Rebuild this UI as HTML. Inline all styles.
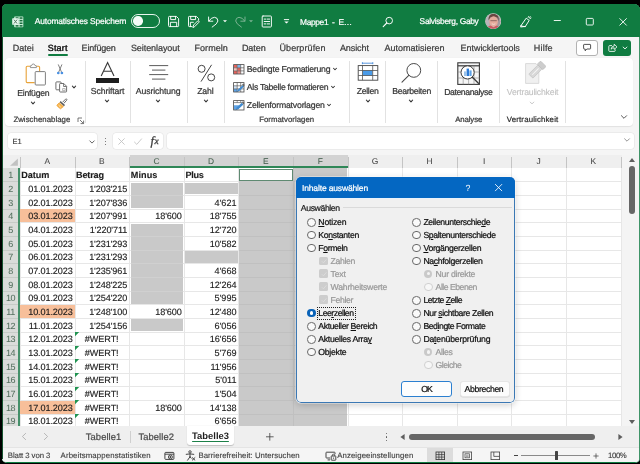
<!DOCTYPE html>
<html><head><meta charset="utf-8"><title>Excel</title>
<style>
html,body{margin:0;padding:0;background:#000;}
body{width:640px;height:464px;position:relative;overflow:hidden;font-family:"Liberation Sans",sans-serif;}
.r{position:absolute;display:block;}
.t{position:absolute;white-space:pre;display:block;text-rendering:geometricPrecision;}
u{text-decoration:underline;text-underline-offset:1px;text-decoration-thickness:0.7px;}
</style></head><body><div id="root" style="position:absolute;left:0;top:0;width:640px;height:464px;will-change:transform;">
<div class="r" id="win" style="left:1.5px;top:4.0px;width:638.5px;height:459.0px;background:#f5f5f5;border-radius:5px 6px 5px 5px;overflow:hidden;box-shadow:inset 0 0 0 0.9px #107c41;">
</div>
<div class="r" style="left:1.50px;top:4.00px;width:638.50px;height:33.20px;background:#107c41;border-radius:5px 6px 0 0;"></div>
<svg class="r" style="left:12.30px;top:15.50px;" width="12" height="12" viewBox="0 0 12 12"><rect x="2.2" y="0.4" width="9.1" height="10.8" rx="0.7" fill="#c9efd9"/><rect x="3.6" y="1.3" width="2.9" height="1.5" fill="#176c3b"/><rect x="7.6" y="1.3" width="2.9" height="1.5" fill="#176c3b"/><rect x="3.6" y="3.9" width="2.9" height="1.5" fill="#176c3b"/><rect x="7.6" y="3.9" width="2.9" height="1.5" fill="#176c3b"/><rect x="3.6" y="6.5" width="2.9" height="1.5" fill="#176c3b"/><rect x="7.6" y="6.5" width="2.9" height="1.5" fill="#176c3b"/><rect x="3.6" y="9.1" width="2.9" height="1.5" fill="#176c3b"/><rect x="7.6" y="9.1" width="2.9" height="1.5" fill="#176c3b"/><rect x="0.2" y="2.3" width="6.5" height="6.5" rx="0.6" fill="#e6f8ee"/><path d="M2 3.7L5 7.5M5 3.7L2 7.5" stroke="#557a66" stroke-width="1" fill="none"/></svg>
<span class="t" style="left:34.80px;top:15px;font-size:8.4px;line-height:12px;letter-spacing:-0.150px;color:#fff;-webkit-text-stroke:0.22px #fff;">Automatisches Speichern</span>
<div class="r" style="left:131.1px;top:13.7px;width:27px;height:12.3px;border:0.9px solid #e8f6ee;border-radius:7.2px;"></div>
<div class="r" style="left:133.4px;top:16.0px;width:9.6px;height:9.6px;border-radius:50%;background:#f4fbf7;"></div>
<svg class="r" style="left:167.00px;top:14.50px;" width="13" height="13" viewBox="0 0 13 13"><path d="M1.5 2.2Q1.5 1.4 2.3 1.4H9.4L11.6 3.6V10.8Q11.6 11.6 10.8 11.6H2.3Q1.5 11.6 1.5 10.8Z" fill="none" stroke="#fff" stroke-width="0.95" stroke-linejoin="round" stroke-linecap="round"/><path d="M3.7 1.4V4.6H8.6V1.4M3.4 11.6V7.3H9.7V11.6" fill="none" stroke="#fff" stroke-width="0.95" stroke-linejoin="round" stroke-linecap="round"/></svg>
<svg class="r" style="left:187.00px;top:14.50px;" width="13" height="13" viewBox="0 0 13 13"><path d="M5 11.6H2.3Q1.5 11.6 1.5 10.8V2.2Q1.5 1.4 2.3 1.4H9.4L11.6 3.6V5" fill="none" stroke="#fff" stroke-width="0.95" stroke-linejoin="round" stroke-linecap="round"/><path d="M3.7 1.4V4.6H8.6V1.4M3.4 11.6V7.3H6.4" fill="none" stroke="#fff" stroke-width="0.95" stroke-linejoin="round" stroke-linecap="round"/><path d="M6 12.2L6.6 10L10.6 6Q11.3 5.5 11.9 6.1Q12.4 6.7 11.9 7.3L7.9 11.4Z" fill="none" stroke="#fff" stroke-width="0.95" stroke-linejoin="round" stroke-linecap="round"/></svg>
<svg class="r" style="left:207.00px;top:14.50px;" width="13" height="13" viewBox="0 0 13 13"><path d="M1.6 2V6.2H5.8" fill="none" stroke="#fff" stroke-width="0.95" stroke-linejoin="round" stroke-linecap="round"/><path d="M1.9 6Q4.2 2.3 7.6 2.3Q10.9 2.6 10.9 6Q10.7 8.6 5.2 12.1" fill="none" stroke="#fff" stroke-width="0.95" stroke-linejoin="round" stroke-linecap="round"/></svg>
<svg class="r" style="left:220.60px;top:16.50px;" width="8" height="8" viewBox="0 0 8 8"><path d="M2 3.2L4 5.3L6 3.2Z" fill="#fff"/></svg>
<svg class="r" style="left:234.00px;top:14.50px;" width="13" height="13" viewBox="0 0 13 13"><path d="M11 2V6.2H6.8" fill="none" stroke="#7fb596" stroke-width="0.95" stroke-linejoin="round" stroke-linecap="round"/><path d="M10.7 6Q8.4 2.3 5 2.3Q1.7 2.6 1.7 6Q1.9 8.6 7.4 12.1" fill="none" stroke="#7fb596" stroke-width="0.95" stroke-linejoin="round" stroke-linecap="round"/></svg>
<svg class="r" style="left:247.00px;top:16.50px;" width="8" height="8" viewBox="0 0 8 8"><path d="M2 3.2L4 5.3L6 3.2Z" fill="#7fb596"/></svg>
<svg class="r" style="left:261.00px;top:15.00px;" width="12" height="13" viewBox="0 0 12 13"><rect x="1.2" y="1" width="9.2" height="11" rx="0.8" fill="none" stroke="#fff" stroke-width="0.95" stroke-linejoin="round" stroke-linecap="round"/><path d="M3.2 4.1H5M6.4 4.1H8.6M3.2 6.5H8.6M3.2 8.9H5M6.4 8.9H8.6" fill="none" stroke="#fff" stroke-width="0.95" stroke-linejoin="round" stroke-linecap="round"/></svg>
<svg class="r" style="left:282.00px;top:17.00px;" width="9" height="9" viewBox="0 0 9 9"><path d="M2.3 2.6H6.7" fill="none" stroke="#fff" stroke-width="0.95" stroke-linejoin="round" stroke-linecap="round"/><path d="M2.3 4.6L4.5 6.6L6.7 4.6Z" fill="#fff"/></svg>
<span class="t" style="left:300.10px;top:16px;font-size:8.4px;line-height:12px;letter-spacing:-0.361px;color:#fff;-webkit-text-stroke:0.22px #fff;">Mappe1  -  E…</span>
<svg class="r" style="left:382.00px;top:15.50px;" width="12" height="12" viewBox="0 0 12 12"><circle cx="7.2" cy="4.6" r="3.3" fill="none" stroke="#fff" stroke-width="0.95"/><path d="M4.8 7L1.2 10.6" stroke="#fff" stroke-width="1.1" stroke-linecap="round"/></svg>
<span class="t" style="left:419.60px;top:15px;font-size:8.4px;line-height:12px;letter-spacing:-0.304px;color:#fff;-webkit-text-stroke:0.22px #fff;">Salvisberg, Gaby</span>
<svg class="r" style="left:484.50px;top:12.90px;" width="16.4" height="16.4" viewBox="0 0 16.4 16.4"><defs><clipPath id="av"><circle cx="8.2" cy="8.2" r="7.5"/></clipPath></defs><circle cx="8.2" cy="8.2" r="8" fill="#d8cfcf"/><g clip-path="url(#av)"><rect x="0" y="0" width="16.4" height="16.4" fill="#a39a9e"/><rect x="0" y="0" width="4.6" height="16.4" fill="#b9b4ba"/><path d="M3.6 7.5Q3 1 8.8 0.8Q14.6 1.2 13.6 8.4L12.4 4.6H5.2Z" fill="#6a4640"/><ellipse cx="8.6" cy="8.6" rx="4.3" ry="5.3" fill="#e6ab9c"/><path d="M0.6 16.4Q1.8 13 6 12.8L8.5 14.4L11.2 12.8Q15 13.2 15.8 16.4Z" fill="#cf5a62"/><path d="M5.4 7.7H11.8" stroke="#7a5550" stroke-width="0.8"/><path d="M6.8 10.8Q8.6 12 10.4 10.8" stroke="#f6e4df" stroke-width="0.8" fill="none"/></g></svg>
<svg class="r" style="left:518.50px;top:14.50px;" width="13" height="13" viewBox="0 0 13 13"><path d="M2 10.6L7.2 3.2L10.2 5.4L6.4 11.4Z" fill="none" stroke="#fff" stroke-width="0.95" stroke-linejoin="round" stroke-linecap="round"/><path d="M2 10.6L1.6 12L6.4 11.4" fill="none" stroke="#fff" stroke-width="0.95" stroke-linejoin="round" stroke-linecap="round"/><path d="M9.2 2.4L9.8 1.4M11 3.6L12 3M10.4 2.8L11.4 1.8" fill="none" stroke="#fff" stroke-width="0.95" stroke-linejoin="round" stroke-linecap="round"/></svg>
<svg class="r" style="left:552.00px;top:16.00px;" width="10" height="10" viewBox="0 0 10 10"><path d="M1.8 4.5H8.8" stroke="#fff" stroke-width="0.9"/></svg>
<svg class="r" style="left:585.00px;top:16.50px;" width="10" height="10" viewBox="0 0 10 10"><rect x="1.3" y="1.4" width="7" height="6.6" rx="0.9" fill="none" stroke="#fff" stroke-width="0.9"/></svg>
<svg class="r" style="left:618.00px;top:16.50px;" width="10" height="10" viewBox="0 0 10 10"><path d="M1.8 1.6L8.4 8.2M8.4 1.6L1.8 8.2" stroke="#fff" stroke-width="0.9" stroke-linecap="round"/></svg>
<span class="t" style="left:12.80px;top:42px;font-size:9.0px;line-height:12px;letter-spacing:-0.042px;color:#3b3b3b;-webkit-text-stroke:0.22px #3b3b3b;">Datei</span>
<span class="t" style="left:47.80px;top:42px;font-size:9.0px;line-height:12px;letter-spacing:0.159px;color:#1f1f1f;-webkit-text-stroke:0.22px #1f1f1f;text-shadow:0 0 0.4px #222;">Start</span>
<div class="r" style="left:48.00px;top:54.40px;width:20.20px;height:1.20px;background:#107c41;border-radius:1px;"></div>
<span class="t" style="left:81.60px;top:42px;font-size:9.0px;line-height:12px;letter-spacing:-0.179px;color:#3b3b3b;-webkit-text-stroke:0.22px #3b3b3b;">Einfügen</span>
<span class="t" style="left:130.90px;top:42px;font-size:9.0px;line-height:12px;letter-spacing:-0.061px;color:#3b3b3b;-webkit-text-stroke:0.22px #3b3b3b;">Seitenlayout</span>
<span class="t" style="left:194.60px;top:42px;font-size:9.0px;line-height:12px;letter-spacing:0.013px;color:#3b3b3b;-webkit-text-stroke:0.22px #3b3b3b;">Formeln</span>
<span class="t" style="left:241.90px;top:42px;font-size:9.0px;line-height:12px;letter-spacing:-0.063px;color:#3b3b3b;-webkit-text-stroke:0.22px #3b3b3b;">Daten</span>
<span class="t" style="left:279.40px;top:42px;font-size:9.0px;line-height:12px;letter-spacing:0.117px;color:#3b3b3b;-webkit-text-stroke:0.22px #3b3b3b;">Überprüfen</span>
<span class="t" style="left:339.90px;top:42px;font-size:9.0px;line-height:12px;letter-spacing:-0.088px;color:#3b3b3b;-webkit-text-stroke:0.22px #3b3b3b;">Ansicht</span>
<span class="t" style="left:384.60px;top:42px;font-size:9.0px;line-height:12px;letter-spacing:-0.002px;color:#3b3b3b;-webkit-text-stroke:0.22px #3b3b3b;">Automatisieren</span>
<span class="t" style="left:460.60px;top:42px;font-size:9.0px;line-height:12px;letter-spacing:-0.055px;color:#3b3b3b;-webkit-text-stroke:0.22px #3b3b3b;">Entwicklertools</span>
<span class="t" style="left:533.80px;top:42px;font-size:9.0px;line-height:12px;letter-spacing:0.199px;color:#3b3b3b;-webkit-text-stroke:0.22px #3b3b3b;">Hilfe</span>
<div class="r" style="left:576.2px;top:39.8px;width:20px;height:14.6px;border:0.8px solid #b2b2b2;border-radius:3px;background:#fff;"></div>
<svg class="r" style="left:581.60px;top:43.00px;" width="11" height="10" viewBox="0 0 11 10"><path d="M2.2 1.4H8Q8.6 1.4 8.6 2V5.4Q8.6 6 8 6H4.8L3.2 7.8V6H2.2Q1.6 6 1.6 5.4V2Q1.6 1.4 2.2 1.4Z" fill="none" stroke="#333" stroke-width="0.85" stroke-linejoin="round"/></svg>
<div class="r" style="left:603.20px;top:40.20px;width:28.00px;height:15.40px;background:#107c41;border-radius:3px;"></div>
<svg class="r" style="left:606.50px;top:42.30px;" width="11" height="11" viewBox="0 0 11 11"><path d="M4.6 3.6H2.6Q1.8 3.6 1.8 4.4V8.6Q1.8 9.4 2.6 9.4H7.4Q8.2 9.4 8.2 8.6V7.8" fill="none" stroke="#fff" stroke-width="0.85" stroke-linecap="round"/><path d="M4 7.2Q4.4 4.2 7.2 4V2.2L10 4.9L7.2 7.4V5.8Q5.2 5.8 4 7.2Z" fill="none" stroke="#fff" stroke-width="0.8" stroke-linejoin="round"/></svg>
<svg class="r" style="left:621.20px;top:44.00px;" width="8" height="8" viewBox="0 0 8 8"><path d="M2.1 3.05L4 4.95L5.9 3.05" fill="none" stroke="#fff" stroke-width="0.9" stroke-linecap="round" stroke-linejoin="round"/></svg>
<div class="r" style="left:5.2px;top:57.6px;width:627.6px;height:68.6px;background:#fff;border-radius:4px;box-shadow:0 0.4px 1px rgba(0,0,0,0.08);"></div>
<div class="r" style="left:85.20px;top:61.00px;width:0.80px;height:61.50px;background:#e2e2e2;"></div>
<div class="r" style="left:129.80px;top:61.00px;width:0.80px;height:61.50px;background:#e2e2e2;"></div>
<div class="r" style="left:186.80px;top:61.00px;width:0.80px;height:61.50px;background:#e2e2e2;"></div>
<div class="r" style="left:224.20px;top:61.00px;width:0.80px;height:61.50px;background:#e2e2e2;"></div>
<div class="r" style="left:348.80px;top:61.00px;width:0.80px;height:61.50px;background:#e2e2e2;"></div>
<div class="r" style="left:385.20px;top:61.00px;width:0.80px;height:61.50px;background:#e2e2e2;"></div>
<div class="r" style="left:436.80px;top:61.00px;width:0.80px;height:61.50px;background:#e2e2e2;"></div>
<div class="r" style="left:499.20px;top:61.00px;width:0.80px;height:61.50px;background:#e2e2e2;"></div>
<div class="r" style="left:565.20px;top:61.00px;width:0.80px;height:61.50px;background:#e2e2e2;"></div>
<svg class="r" style="left:25.00px;top:62.80px;" width="21.5" height="23" viewBox="0 0 21.5 23"><path d="M5.6 3.2H2.2Q1.2 3.2 1.2 4.2V18.6Q1.2 19.6 2.2 19.6H9.6" fill="none" stroke="#e8a33a" stroke-width="1.1" stroke-linejoin="round"/><path d="M11.4 3.2H13.6Q14.6 3.2 14.6 4.2V8.4" fill="none" stroke="#e8a33a" stroke-width="1.1"/><path d="M5.4 4.6V3.2Q5.4 2.6 6 2.6H6.6Q6.8 1 8.3 1Q9.8 1 10 2.6H10.8Q11.4 2.6 11.4 3.2V4.6Z" fill="#fff" stroke="#7a7a7a" stroke-width="0.8" stroke-linejoin="round"/><rect x="10.2" y="8.6" width="10.2" height="13.4" rx="0.8" fill="#fff" stroke="#707070" stroke-width="0.9"/></svg>
<span class="t" style="left:17.20px;top:87px;font-size:8.7px;line-height:12px;letter-spacing:-0.268px;color:#363636;-webkit-text-stroke:0.22px #363636;">Einfügen</span>
<svg class="r" style="left:29.00px;top:98.60px;" width="8" height="8" viewBox="0 0 8 8"><path d="M2.4 3.2L4 4.8L5.6 3.2" fill="none" stroke="#3a3a3a" stroke-width="1.1" stroke-linecap="round" stroke-linejoin="round"/></svg>
<svg class="r" style="left:56.30px;top:63.80px;" width="9" height="12" viewBox="0 0 9 12"><path d="M2.4 0.8L5.3 7.6M5.8 0.8L2.9 7.6" stroke="#6a6a6a" stroke-width="0.85" fill="none" stroke-linecap="round"/><circle cx="2.3" cy="9" r="1.35" fill="#4a90e2"/><circle cx="5.9" cy="9" r="1.35" fill="#4a90e2"/></svg>
<svg class="r" style="left:54.80px;top:81.00px;" width="13" height="12" viewBox="0 0 13 12"><path d="M4.4 8.8H1.6Q0.9 8.8 0.9 8.1V1.6Q0.9 0.9 1.6 0.9H5.4Q6.1 0.9 6.1 1.6V2.4" fill="none" stroke="#555" stroke-width="0.85"/><path d="M4.6 3.2Q4.6 2.5 5.3 2.5H8.8L11.6 5.3V10.3Q11.6 11 10.9 11H5.3Q4.6 11 4.6 10.3Z" fill="#fff" stroke="#555" stroke-width="0.85" stroke-linejoin="round"/><path d="M8.6 2.7V5.5H11.4" fill="none" stroke="#555" stroke-width="0.8"/><path d="M7.6 7.6H10.2V9.6H7.6Z" fill="none" stroke="#888" stroke-width="0.6"/></svg>
<svg class="r" style="left:69.60px;top:82.60px;" width="8" height="8" viewBox="0 0 8 8"><path d="M2.4 3.2L4 4.8L5.6 3.2" fill="none" stroke="#3a3a3a" stroke-width="1.1" stroke-linecap="round" stroke-linejoin="round"/></svg>
<svg class="r" style="left:55.50px;top:98.20px;" width="12" height="12" viewBox="0 0 12 12"><path d="M7 3.8L9.6 1.1Q10.2 0.6 10.7 1.1Q11.2 1.6 10.7 2.2L8.2 5" fill="none" stroke="#6a6a6a" stroke-width="1" stroke-linecap="round"/><path d="M4.6 3L9 7L8 8.2L3.6 4.2Z" fill="#5e5e5e"/><path d="M3.2 4.8L7.4 8.6L4.6 10.8Q2.2 9.6 0.8 7.2Z" fill="#f7b54e" stroke="#ea9a2c" stroke-width="0.7" stroke-linejoin="round"/><path d="M2.6 7.2L4.8 9.2" stroke="#fde6c0" stroke-width="0.9"/></svg>
<span class="t" style="left:13.40px;top:114px;font-size:7.8px;line-height:11px;letter-spacing:0.045px;color:#3a3a3a;-webkit-text-stroke:0.22px #3a3a3a;">Zwischenablage</span>
<svg class="r" style="left:76.50px;top:116.50px;" width="8" height="8" viewBox="0 0 8 8"><path d="M1 5V1H5" fill="none" stroke="#555" stroke-width="0.8"/><path d="M3 3L6.4 6.4M6.6 3.6V6.6H3.6" fill="none" stroke="#555" stroke-width="0.8"/></svg>
<svg class="r" style="left:99.00px;top:61.00px;" width="18" height="17" viewBox="0 0 18 17"><path d="M2.2 15L8.6 1.6L15 15M4.5 10.2H12.7" fill="none" stroke="#3a3a3a" stroke-width="1.15" stroke-linejoin="miter"/></svg>
<div class="r" style="left:96.20px;top:78.20px;width:23.00px;height:4.40px;background:#1e1e1e;"></div>
<span class="t" style="left:90.80px;top:85px;font-size:8.7px;line-height:12px;letter-spacing:-0.121px;color:#363636;-webkit-text-stroke:0.22px #363636;">Schriftart</span>
<svg class="r" style="left:103.20px;top:97.20px;" width="8" height="8" viewBox="0 0 8 8"><path d="M2.4 3.2L4 4.8L5.6 3.2" fill="none" stroke="#3a3a3a" stroke-width="1.1" stroke-linecap="round" stroke-linejoin="round"/></svg>
<svg class="r" style="left:148.00px;top:63.00px;" width="22" height="19" viewBox="0 0 22 19"><path d="M1.2 2.6H20.2M4 7.1H17.4M1.2 11.6H20.2M4 16.1H17.4" stroke="#4a4a4a" stroke-width="0.9" fill="none"/></svg>
<span class="t" style="left:135.80px;top:85px;font-size:8.7px;line-height:12px;letter-spacing:-0.104px;color:#363636;-webkit-text-stroke:0.22px #363636;">Ausrichtung</span>
<svg class="r" style="left:154.20px;top:97.20px;" width="8" height="8" viewBox="0 0 8 8"><path d="M2.4 3.2L4 4.8L5.6 3.2" fill="none" stroke="#3a3a3a" stroke-width="1.1" stroke-linecap="round" stroke-linejoin="round"/></svg>
<svg class="r" style="left:195.50px;top:62.50px;" width="21" height="21" viewBox="0 0 21 21"><circle cx="5.6" cy="5.8" r="3.5" fill="none" stroke="#444" stroke-width="1"/><circle cx="15.2" cy="14.4" r="3.5" fill="none" stroke="#444" stroke-width="1"/><path d="M15.6 1.8L5 18.6" stroke="#444" stroke-width="1" fill="none"/></svg>
<span class="t" style="left:197.20px;top:85px;font-size:8.7px;line-height:12px;letter-spacing:-0.131px;color:#363636;-webkit-text-stroke:0.22px #363636;">Zahl</span>
<svg class="r" style="left:201.60px;top:97.20px;" width="8" height="8" viewBox="0 0 8 8"><path d="M2.4 3.2L4 4.8L5.6 3.2" fill="none" stroke="#3a3a3a" stroke-width="1.1" stroke-linecap="round" stroke-linejoin="round"/></svg>
<svg class="r" style="left:232.70px;top:63.60px;" width="12" height="11" viewBox="0 0 12 11"><rect x="0.6" y="0.6" width="10.4" height="9.4" fill="#fff"/><rect x="0.8" y="0.8" width="3.3" height="2.9" fill="#e9635c"/><rect x="4.3" y="0.8" width="3.3" height="2.9" fill="#7fb2e6"/><rect x="0.8" y="3.9" width="3.3" height="2.9" fill="#f6c4c0"/><rect x="4.3" y="3.9" width="3.3" height="2.9" fill="#e9635c"/><rect x="0.8" y="7" width="3.3" height="2.9" fill="#e9635c"/><rect x="4.3" y="7" width="3.3" height="2.9" fill="#f08a84"/><path d="M0.6 3.8H11M0.6 6.9H11M4.2 0.6V10M7.7 0.6V10" stroke="#555" stroke-width="0.65"/><rect x="0.6" y="0.6" width="10.4" height="9.4" fill="none" stroke="#4a4a4a" stroke-width="0.8"/></svg>
<svg class="r" style="left:232.70px;top:81.80px;" width="12" height="11" viewBox="0 0 12 11"><rect x="0.6" y="0.6" width="10.4" height="9.4" fill="#fff"/><rect x="0.8" y="7" width="3.3" height="2.9" fill="#5fa3e6"/><rect x="0.8" y="3.9" width="3.3" height="2.9" fill="#cfe3f7"/><path d="M0.6 3.8H11M0.6 6.9H11M4.2 0.6V10M7.7 0.6V10" stroke="#555" stroke-width="0.65"/><path d="M3.6 10.2L5 7.6L9.6 3.2L11 4.6L6.4 9Z" fill="#3f8ad0"/><path d="M9 2.6L10.2 1.4L11.8 3L10.6 4.2Z" fill="#777"/><rect x="0.6" y="0.6" width="10.4" height="9.4" fill="none" stroke="#4a4a4a" stroke-width="0.8"/></svg>
<svg class="r" style="left:232.70px;top:99.60px;" width="12" height="11" viewBox="0 0 12 11"><rect x="0.6" y="0.6" width="10.4" height="9.4" fill="#fff"/><path d="M0.8 5.2H6.4L2.2 9.8H0.8Z" fill="#5fa3e6"/><path d="M0.6 2.6H11M4.2 0.6V2.6M7.7 0.6V2.6" stroke="#555" stroke-width="0.65"/><path d="M2.2 10.2L3.6 7.4L8.8 2.8L10.4 4.4L5.4 9.2Z" fill="#3f8ad0"/><path d="M8.6 2.4L9.8 1.2L11.6 3L10.4 4.2Z" fill="#777"/><rect x="0.6" y="0.6" width="10.4" height="9.4" fill="none" stroke="#4a4a4a" stroke-width="0.8"/></svg>
<span class="t" style="left:246.80px;top:63px;font-size:8.7px;line-height:12px;letter-spacing:-0.233px;color:#363636;-webkit-text-stroke:0.22px #363636;">Bedingte Formatierung</span>
<svg class="r" style="left:330.60px;top:65.40px;" width="8" height="8" viewBox="0 0 8 8"><path d="M2.5 3.25L4 4.75L5.5 3.25" fill="none" stroke="#3a3a3a" stroke-width="1.05" stroke-linecap="round" stroke-linejoin="round"/></svg>
<span class="t" style="left:246.80px;top:81px;font-size:8.7px;line-height:12px;letter-spacing:-0.293px;color:#363636;-webkit-text-stroke:0.22px #363636;">Als Tabelle formatieren</span>
<svg class="r" style="left:329.00px;top:83.20px;" width="8" height="8" viewBox="0 0 8 8"><path d="M2.5 3.25L4 4.75L5.5 3.25" fill="none" stroke="#3a3a3a" stroke-width="1.05" stroke-linecap="round" stroke-linejoin="round"/></svg>
<span class="t" style="left:246.80px;top:99px;font-size:8.7px;line-height:12px;letter-spacing:-0.186px;color:#363636;-webkit-text-stroke:0.22px #363636;">Zellenformatvorlagen</span>
<svg class="r" style="left:325.00px;top:101.20px;" width="8" height="8" viewBox="0 0 8 8"><path d="M2.5 3.25L4 4.75L5.5 3.25" fill="none" stroke="#3a3a3a" stroke-width="1.05" stroke-linecap="round" stroke-linejoin="round"/></svg>
<span class="t" style="left:259.20px;top:114px;font-size:7.8px;line-height:11px;letter-spacing:0.027px;color:#3a3a3a;-webkit-text-stroke:0.22px #3a3a3a;">Formatvorlagen</span>
<svg class="r" style="left:356.50px;top:60.50px;" width="22" height="21" viewBox="0 0 22 21"><path d="M5.4 1.2V3.2M15.8 1.2V3.2M5.4 2.2H15.8" stroke="#2e7cd6" stroke-width="0.8" fill="none"/><rect x="1.2" y="4.6" width="19.6" height="14.6" fill="#fff" stroke="#444" stroke-width="0.9"/><rect x="5.7" y="9.3" width="9.8" height="5.4" fill="#4a9be8"/><path d="M1.2 9.5H20.8M1.2 14.5H20.8M5.5 4.6V19.2M15.7 4.6V19.2" stroke="#555" stroke-width="0.8" fill="none"/></svg>
<span class="t" style="left:356.80px;top:85px;font-size:8.7px;line-height:12px;letter-spacing:-0.349px;color:#363636;-webkit-text-stroke:0.22px #363636;">Zellen</span>
<svg class="r" style="left:363.60px;top:97.20px;" width="8" height="8" viewBox="0 0 8 8"><path d="M2.4 3.2L4 4.8L5.6 3.2" fill="none" stroke="#3a3a3a" stroke-width="1.1" stroke-linecap="round" stroke-linejoin="round"/></svg>
<svg class="r" style="left:400.00px;top:61.00px;" width="24" height="24" viewBox="0 0 24 24"><circle cx="13.8" cy="9.4" r="6.9" fill="none" stroke="#4a4a4a" stroke-width="1"/><path d="M8.8 14.4L2 21.2" stroke="#4a4a4a" stroke-width="1.1" stroke-linecap="round"/></svg>
<span class="t" style="left:392.20px;top:85px;font-size:8.7px;line-height:12px;letter-spacing:-0.328px;color:#363636;-webkit-text-stroke:0.22px #363636;">Bearbeiten</span>
<svg class="r" style="left:407.20px;top:97.20px;" width="8" height="8" viewBox="0 0 8 8"><path d="M2.4 3.2L4 4.8L5.6 3.2" fill="none" stroke="#3a3a3a" stroke-width="1.1" stroke-linecap="round" stroke-linejoin="round"/></svg>
<svg class="r" style="left:457.00px;top:62.00px;" width="24" height="24" viewBox="0 0 24 24"><rect x="0.8" y="0.8" width="21.6" height="21.6" fill="#f6f6f6" stroke="#3a3a3a" stroke-width="1.1"/><path d="M0.8 3.8H22.4" stroke="#3a3a3a" stroke-width="1.2"/><path d="M0.8 10H22.4M0.8 16H22.4M6.2 3.8V22.4M11.6 3.8V22.4M17 3.8V22.4" stroke="#8a8a8a" stroke-width="0.6" fill="none"/><circle cx="10.6" cy="10.4" r="6.6" fill="#fff" stroke="#3a3a3a" stroke-width="1"/><rect x="7" y="9.4" width="2.2" height="4.6" fill="#9cc4ea"/><rect x="9.6" y="6.6" width="2.4" height="7.4" fill="#2e7cd6"/><rect x="12.4" y="8.4" width="2.2" height="5.6" fill="#5fa3e6"/><path d="M15.4 15.2L21.4 21.2" stroke="#3a3a3a" stroke-width="1.3" stroke-linecap="round"/></svg>
<span class="t" style="left:444.20px;top:86px;font-size:8.7px;line-height:12px;letter-spacing:-0.417px;color:#363636;-webkit-text-stroke:0.22px #363636;">Datenanalyse</span>
<span class="t" style="left:455.20px;top:114px;font-size:7.8px;line-height:11px;letter-spacing:-0.107px;color:#3a3a3a;-webkit-text-stroke:0.22px #3a3a3a;">Analyse</span>
<svg class="r" style="left:524.00px;top:61.00px;" width="22" height="24" viewBox="0 0 22 24"><path d="M1.6 2.6H12L14.8 5.4V22.4H1.6Z" fill="#f0f0f0" stroke="#d2d2d2" stroke-width="0.8"/><g transform="rotate(-45 12.5 9.5)"><rect x="4.5" y="6.6" width="13" height="5.8" rx="0.8" fill="#d8d8d8" stroke="#c2c2c2" stroke-width="0.7"/><rect x="17.5" y="5.6" width="4.6" height="7.8" rx="0.8" fill="#cdcdcd" stroke="#bdbdbd" stroke-width="0.7"/><path d="M6.5 9.5H15.5" stroke="#f4f4f4" stroke-width="1"/></g></svg>
<span class="t" style="left:506.80px;top:86px;font-size:8.7px;line-height:12px;letter-spacing:-0.203px;color:#c2c2c2;-webkit-text-stroke:0.1px #c2c2c2;">Vertraulichkeit</span>
<svg class="r" style="left:528.20px;top:99.00px;" width="8" height="8" viewBox="0 0 8 8"><path d="M2.2 3.1L4 4.9L5.8 3.1" fill="none" stroke="#c0c0c0" stroke-width="0.9" stroke-linecap="round" stroke-linejoin="round"/></svg>
<span class="t" style="left:506.80px;top:114px;font-size:7.8px;line-height:11px;letter-spacing:0.174px;color:#2e2e2e;-webkit-text-stroke:0.22px #2e2e2e;">Vertraulichkeit</span>
<svg class="r" style="left:619.80px;top:112.80px;" width="8" height="8" viewBox="0 0 8 8"><path d="M1.4 2.7L4 5.3L6.6 2.7" fill="none" stroke="#444" stroke-width="0.9" stroke-linecap="round" stroke-linejoin="round"/></svg>
<div class="r" style="left:7.8px;top:133.2px;width:89.6px;height:16.2px;background:#fff;border-radius:3px;box-shadow:0 0 0 0.5px #e2e2e2;"></div>
<span class="t" style="left:12.40px;top:136px;font-size:7.6px;line-height:11px;letter-spacing:0.102px;color:#333;-webkit-text-stroke:0.12px #333;">E1</span>
<svg class="r" style="left:87.60px;top:137.60px;" width="8" height="8" viewBox="0 0 8 8"><path d="M1.7999999999999998 2.9L4 5.1L6.2 2.9" fill="none" stroke="#555" stroke-width="0.9" stroke-linecap="round" stroke-linejoin="round"/></svg>
<div class="r" style="left:105.00px;top:137.55px;width:1.30px;height:1.30px;background:#555;border-radius:50%;"></div>
<div class="r" style="left:105.00px;top:140.75px;width:1.30px;height:1.30px;background:#555;border-radius:50%;"></div>
<div class="r" style="left:105.00px;top:143.95px;width:1.30px;height:1.30px;background:#555;border-radius:50%;"></div>
<div class="r" style="left:113.2px;top:133.2px;width:49.8px;height:16.2px;background:#fff;border-radius:3px;box-shadow:0 0 0 0.5px #e2e2e2;"></div>
<svg class="r" style="left:116.50px;top:137.00px;" width="9" height="9" viewBox="0 0 9 9"><path d="M1.4 1.4L7.6 7.6M7.6 1.4L1.4 7.6" stroke="#c4c4c4" stroke-width="0.9"/></svg>
<svg class="r" style="left:132.50px;top:137.00px;" width="10" height="9" viewBox="0 0 10 9"><path d="M1.2 4.8L3.8 7.4L8.8 1.6" stroke="#c4c4c4" stroke-width="0.9" fill="none"/></svg>
<span class="t" style="left:150.6px;top:133px;font-size:12.5px;line-height:16px;font-family:'Liberation Serif',serif;font-style:italic;-webkit-text-stroke:0.3px #3c3c3c;color:#3c3c3c;">f</span>
<span class="t" style="left:154.6px;top:136px;font-size:9.5px;line-height:12px;font-family:'Liberation Serif',serif;font-style:italic;-webkit-text-stroke:0.3px #3c3c3c;color:#3c3c3c;">x</span>
<div class="r" style="left:166.6px;top:133.2px;width:467.4px;height:16.2px;background:#fff;border-radius:3px;box-shadow:0 0 0 0.5px #e2e2e2;"></div>
<svg class="r" style="left:623.40px;top:135.60px;" width="8" height="8" viewBox="0 0 8 8"><path d="M1.6 2.8L4 5.2L6.4 2.8" fill="none" stroke="#8a8a8a" stroke-width="0.9" stroke-linecap="round" stroke-linejoin="round"/></svg>
<div class="r" style="left:20.40px;top:167.85px;width:601.20px;height:257.95px;background:#fff;"></div>
<div class="r" style="left:2.00px;top:154.80px;width:619.60px;height:13.05px;background:#efefef;"></div>
<div class="r" style="left:129.60px;top:154.80px;width:218.40px;height:13.05px;background:#d3d3d3;"></div>
<div class="r" style="left:2.00px;top:167.85px;width:16.20px;height:257.95px;background:#dadcda;"></div>
<div class="r" style="left:17.90px;top:167.85px;width:1.90px;height:257.95px;background:#45906a;"></div>
<svg class="r" style="left:8.50px;top:156.50px;" width="10" height="10" viewBox="0 0 10 10"><path d="M8.9 1.4V8.8H1.1Z" fill="#c2c2c2"/></svg>
<div class="r" style="left:20.05px;top:167.85px;width:0.70px;height:257.95px;background:#e7e7e7;"></div>
<div class="r" style="left:74.65px;top:167.85px;width:0.70px;height:257.95px;background:#e7e7e7;"></div>
<div class="r" style="left:129.25px;top:167.85px;width:0.70px;height:257.95px;background:#e7e7e7;"></div>
<div class="r" style="left:183.85px;top:167.85px;width:0.70px;height:257.95px;background:#e7e7e7;"></div>
<div class="r" style="left:238.45px;top:167.85px;width:0.70px;height:257.95px;background:#e7e7e7;"></div>
<div class="r" style="left:293.05px;top:167.85px;width:0.70px;height:257.95px;background:#e7e7e7;"></div>
<div class="r" style="left:347.65px;top:167.85px;width:0.70px;height:257.95px;background:#e7e7e7;"></div>
<div class="r" style="left:402.25px;top:167.85px;width:0.70px;height:257.95px;background:#e7e7e7;"></div>
<div class="r" style="left:456.85px;top:167.85px;width:0.70px;height:257.95px;background:#e7e7e7;"></div>
<div class="r" style="left:511.45px;top:167.85px;width:0.70px;height:257.95px;background:#e7e7e7;"></div>
<div class="r" style="left:566.05px;top:167.85px;width:0.70px;height:257.95px;background:#e7e7e7;"></div>
<div class="r" style="left:620.65px;top:167.85px;width:0.70px;height:257.95px;background:#e7e7e7;"></div>
<div class="r" style="left:20.40px;top:181.17px;width:600.60px;height:0.70px;background:#e7e7e7;"></div>
<div class="r" style="left:20.40px;top:194.84px;width:600.60px;height:0.70px;background:#e7e7e7;"></div>
<div class="r" style="left:20.40px;top:208.51px;width:600.60px;height:0.70px;background:#e7e7e7;"></div>
<div class="r" style="left:20.40px;top:222.18px;width:600.60px;height:0.70px;background:#e7e7e7;"></div>
<div class="r" style="left:20.40px;top:235.85px;width:600.60px;height:0.70px;background:#e7e7e7;"></div>
<div class="r" style="left:20.40px;top:249.52px;width:600.60px;height:0.70px;background:#e7e7e7;"></div>
<div class="r" style="left:20.40px;top:263.19px;width:600.60px;height:0.70px;background:#e7e7e7;"></div>
<div class="r" style="left:20.40px;top:276.86px;width:600.60px;height:0.70px;background:#e7e7e7;"></div>
<div class="r" style="left:20.40px;top:290.53px;width:600.60px;height:0.70px;background:#e7e7e7;"></div>
<div class="r" style="left:20.40px;top:304.20px;width:600.60px;height:0.70px;background:#e7e7e7;"></div>
<div class="r" style="left:20.40px;top:317.87px;width:600.60px;height:0.70px;background:#e7e7e7;"></div>
<div class="r" style="left:20.40px;top:331.54px;width:600.60px;height:0.70px;background:#e7e7e7;"></div>
<div class="r" style="left:20.40px;top:345.21px;width:600.60px;height:0.70px;background:#e7e7e7;"></div>
<div class="r" style="left:20.40px;top:358.88px;width:600.60px;height:0.70px;background:#e7e7e7;"></div>
<div class="r" style="left:20.40px;top:372.55px;width:600.60px;height:0.70px;background:#e7e7e7;"></div>
<div class="r" style="left:20.40px;top:386.22px;width:600.60px;height:0.70px;background:#e7e7e7;"></div>
<div class="r" style="left:20.40px;top:399.89px;width:600.60px;height:0.70px;background:#e7e7e7;"></div>
<div class="r" style="left:20.40px;top:413.56px;width:600.60px;height:0.70px;background:#e7e7e7;"></div>
<div class="r" style="left:20.05px;top:156.50px;width:0.70px;height:11.35px;background:#c4c4c4;"></div>
<div class="r" style="left:74.65px;top:156.50px;width:0.70px;height:11.35px;background:#c4c4c4;"></div>
<div class="r" style="left:129.25px;top:156.50px;width:0.70px;height:11.35px;background:#c4c4c4;"></div>
<div class="r" style="left:183.85px;top:156.50px;width:0.70px;height:11.35px;background:#c4c4c4;"></div>
<div class="r" style="left:238.45px;top:156.50px;width:0.70px;height:11.35px;background:#c4c4c4;"></div>
<div class="r" style="left:293.05px;top:156.50px;width:0.70px;height:11.35px;background:#c4c4c4;"></div>
<div class="r" style="left:347.65px;top:156.50px;width:0.70px;height:11.35px;background:#c4c4c4;"></div>
<div class="r" style="left:402.25px;top:156.50px;width:0.70px;height:11.35px;background:#c4c4c4;"></div>
<div class="r" style="left:456.85px;top:156.50px;width:0.70px;height:11.35px;background:#c4c4c4;"></div>
<div class="r" style="left:511.45px;top:156.50px;width:0.70px;height:11.35px;background:#c4c4c4;"></div>
<div class="r" style="left:566.05px;top:156.50px;width:0.70px;height:11.35px;background:#c4c4c4;"></div>
<div class="r" style="left:620.65px;top:156.50px;width:0.70px;height:11.35px;background:#c4c4c4;"></div>
<div class="r" style="left:2.00px;top:181.17px;width:16.00px;height:0.70px;background:#c6cbc7;"></div>
<div class="r" style="left:2.00px;top:194.84px;width:16.00px;height:0.70px;background:#c6cbc7;"></div>
<div class="r" style="left:2.00px;top:208.51px;width:16.00px;height:0.70px;background:#c6cbc7;"></div>
<div class="r" style="left:2.00px;top:222.18px;width:16.00px;height:0.70px;background:#c6cbc7;"></div>
<div class="r" style="left:2.00px;top:235.85px;width:16.00px;height:0.70px;background:#c6cbc7;"></div>
<div class="r" style="left:2.00px;top:249.52px;width:16.00px;height:0.70px;background:#c6cbc7;"></div>
<div class="r" style="left:2.00px;top:263.19px;width:16.00px;height:0.70px;background:#c6cbc7;"></div>
<div class="r" style="left:2.00px;top:276.86px;width:16.00px;height:0.70px;background:#c6cbc7;"></div>
<div class="r" style="left:2.00px;top:290.53px;width:16.00px;height:0.70px;background:#c6cbc7;"></div>
<div class="r" style="left:2.00px;top:304.20px;width:16.00px;height:0.70px;background:#c6cbc7;"></div>
<div class="r" style="left:2.00px;top:317.87px;width:16.00px;height:0.70px;background:#c6cbc7;"></div>
<div class="r" style="left:2.00px;top:331.54px;width:16.00px;height:0.70px;background:#c6cbc7;"></div>
<div class="r" style="left:2.00px;top:345.21px;width:16.00px;height:0.70px;background:#c6cbc7;"></div>
<div class="r" style="left:2.00px;top:358.88px;width:16.00px;height:0.70px;background:#c6cbc7;"></div>
<div class="r" style="left:2.00px;top:372.55px;width:16.00px;height:0.70px;background:#c6cbc7;"></div>
<div class="r" style="left:2.00px;top:386.22px;width:16.00px;height:0.70px;background:#c6cbc7;"></div>
<div class="r" style="left:2.00px;top:399.89px;width:16.00px;height:0.70px;background:#c6cbc7;"></div>
<div class="r" style="left:2.00px;top:413.56px;width:16.00px;height:0.70px;background:#c6cbc7;"></div>
<div class="r" style="left:129.60px;top:166.40px;width:218.40px;height:1.50px;background:#2f8757;"></div>
<span class="t" style="left:44.50px;top:155px;font-size:8.4px;line-height:12px;letter-spacing:0.800px;color:#444;-webkit-text-stroke:0.05px #444;">A</span>
<span class="t" style="left:99.10px;top:155px;font-size:8.4px;line-height:12px;letter-spacing:0.800px;color:#444;-webkit-text-stroke:0.05px #444;">B</span>
<span class="t" style="left:153.47px;top:155px;font-size:8.4px;line-height:12px;letter-spacing:0.800px;color:#46604f;-webkit-text-stroke:0.05px #46604f;">C</span>
<span class="t" style="left:208.07px;top:155px;font-size:8.4px;line-height:12px;letter-spacing:0.800px;color:#46604f;-webkit-text-stroke:0.05px #46604f;">D</span>
<span class="t" style="left:262.90px;top:155px;font-size:8.4px;line-height:12px;letter-spacing:0.800px;color:#46604f;-webkit-text-stroke:0.05px #46604f;">E</span>
<span class="t" style="left:317.73px;top:155px;font-size:8.4px;line-height:12px;letter-spacing:0.800px;color:#46604f;-webkit-text-stroke:0.05px #46604f;">F</span>
<span class="t" style="left:371.63px;top:155px;font-size:8.4px;line-height:12px;letter-spacing:0.800px;color:#444;-webkit-text-stroke:0.05px #444;">G</span>
<span class="t" style="left:426.47px;top:155px;font-size:8.4px;line-height:12px;letter-spacing:0.800px;color:#444;-webkit-text-stroke:0.05px #444;">H</span>
<span class="t" style="left:482.93px;top:155px;font-size:8.4px;line-height:12px;letter-spacing:0.800px;color:#444;-webkit-text-stroke:0.05px #444;">I</span>
<span class="t" style="left:536.60px;top:155px;font-size:8.4px;line-height:12px;letter-spacing:0.800px;color:#444;-webkit-text-stroke:0.05px #444;">J</span>
<span class="t" style="left:590.50px;top:155px;font-size:8.4px;line-height:12px;letter-spacing:0.800px;color:#444;-webkit-text-stroke:0.05px #444;">K</span>
<span class="t" style="left:8.25px;top:169px;font-size:9.0px;line-height:12px;letter-spacing:-0.501px;color:#55705f;-webkit-text-stroke:0.05px #55705f;">1</span>
<span class="t" style="left:8.25px;top:183px;font-size:9.0px;line-height:12px;letter-spacing:-0.501px;color:#55705f;-webkit-text-stroke:0.05px #55705f;">2</span>
<span class="t" style="left:8.25px;top:197px;font-size:9.0px;line-height:12px;letter-spacing:-0.501px;color:#55705f;-webkit-text-stroke:0.05px #55705f;">3</span>
<span class="t" style="left:8.25px;top:210px;font-size:9.0px;line-height:12px;letter-spacing:-0.501px;color:#55705f;-webkit-text-stroke:0.05px #55705f;">4</span>
<span class="t" style="left:8.25px;top:224px;font-size:9.0px;line-height:12px;letter-spacing:-0.501px;color:#55705f;-webkit-text-stroke:0.05px #55705f;">5</span>
<span class="t" style="left:8.25px;top:238px;font-size:9.0px;line-height:12px;letter-spacing:-0.501px;color:#55705f;-webkit-text-stroke:0.05px #55705f;">6</span>
<span class="t" style="left:8.25px;top:251px;font-size:9.0px;line-height:12px;letter-spacing:-0.501px;color:#55705f;-webkit-text-stroke:0.05px #55705f;">7</span>
<span class="t" style="left:8.25px;top:265px;font-size:9.0px;line-height:12px;letter-spacing:-0.501px;color:#55705f;-webkit-text-stroke:0.05px #55705f;">8</span>
<span class="t" style="left:8.25px;top:279px;font-size:9.0px;line-height:12px;letter-spacing:-0.501px;color:#55705f;-webkit-text-stroke:0.05px #55705f;">9</span>
<span class="t" style="left:6.00px;top:292px;font-size:9.0px;line-height:12px;letter-spacing:-0.501px;color:#55705f;-webkit-text-stroke:0.05px #55705f;">10</span>
<span class="t" style="left:6.30px;top:306px;font-size:9.0px;line-height:12px;letter-spacing:-0.467px;color:#55705f;-webkit-text-stroke:0.05px #55705f;">11</span>
<span class="t" style="left:6.00px;top:320px;font-size:9.0px;line-height:12px;letter-spacing:-0.501px;color:#55705f;-webkit-text-stroke:0.05px #55705f;">12</span>
<span class="t" style="left:6.00px;top:333px;font-size:9.0px;line-height:12px;letter-spacing:-0.501px;color:#55705f;-webkit-text-stroke:0.05px #55705f;">13</span>
<span class="t" style="left:6.00px;top:347px;font-size:9.0px;line-height:12px;letter-spacing:-0.501px;color:#55705f;-webkit-text-stroke:0.05px #55705f;">14</span>
<span class="t" style="left:6.00px;top:361px;font-size:9.0px;line-height:12px;letter-spacing:-0.501px;color:#55705f;-webkit-text-stroke:0.05px #55705f;">15</span>
<span class="t" style="left:6.00px;top:374px;font-size:9.0px;line-height:12px;letter-spacing:-0.501px;color:#55705f;-webkit-text-stroke:0.05px #55705f;">16</span>
<span class="t" style="left:6.00px;top:388px;font-size:9.0px;line-height:12px;letter-spacing:-0.501px;color:#55705f;-webkit-text-stroke:0.05px #55705f;">17</span>
<span class="t" style="left:6.00px;top:402px;font-size:9.0px;line-height:12px;letter-spacing:-0.501px;color:#55705f;-webkit-text-stroke:0.05px #55705f;">18</span>
<span class="t" style="left:6.00px;top:415px;font-size:9.0px;line-height:12px;letter-spacing:-0.501px;color:#55705f;-webkit-text-stroke:0.05px #55705f;">19</span>
<div class="r" style="left:19.80px;top:209.16px;width:54.90px;height:13.07px;background:#f7bf9a;"></div>
<div class="r" style="left:19.80px;top:304.85px;width:54.90px;height:13.07px;background:#f7bf9a;"></div>
<div class="r" style="left:19.80px;top:400.54px;width:54.90px;height:13.07px;background:#f7bf9a;"></div>
<div class="r" style="left:130.60px;top:182.52px;width:52.60px;height:25.34px;background:#c9c9c9;"></div>
<div class="r" style="left:130.60px;top:194.84px;width:52.60px;height:0.70px;background:#d0d0d0;"></div>
<div class="r" style="left:130.60px;top:223.53px;width:52.60px;height:80.02px;background:#c9c9c9;"></div>
<div class="r" style="left:130.60px;top:235.85px;width:52.60px;height:0.70px;background:#d0d0d0;"></div>
<div class="r" style="left:130.60px;top:249.52px;width:52.60px;height:0.70px;background:#d0d0d0;"></div>
<div class="r" style="left:130.60px;top:263.19px;width:52.60px;height:0.70px;background:#d0d0d0;"></div>
<div class="r" style="left:130.60px;top:276.86px;width:52.60px;height:0.70px;background:#d0d0d0;"></div>
<div class="r" style="left:130.60px;top:290.53px;width:52.60px;height:0.70px;background:#d0d0d0;"></div>
<div class="r" style="left:130.60px;top:319.22px;width:52.60px;height:11.67px;background:#c9c9c9;"></div>
<div class="r" style="left:185.20px;top:182.52px;width:52.60px;height:11.67px;background:#c9c9c9;"></div>
<div class="r" style="left:185.20px;top:250.87px;width:52.60px;height:11.67px;background:#c9c9c9;"></div>
<div class="r" style="left:239.10px;top:180.00px;width:108.30px;height:245.80px;background:#c9c9c9;"></div>
<div class="r" style="left:292.50px;top:168.05px;width:54.90px;height:12.35px;background:#c9c9c9;"></div>
<div class="r" style="left:239.10px;top:194.89px;width:108.30px;height:0.60px;background:#c0c0c0;"></div>
<div class="r" style="left:239.10px;top:208.56px;width:108.30px;height:0.60px;background:#c0c0c0;"></div>
<div class="r" style="left:239.10px;top:222.23px;width:108.30px;height:0.60px;background:#c0c0c0;"></div>
<div class="r" style="left:239.10px;top:235.90px;width:108.30px;height:0.60px;background:#c0c0c0;"></div>
<div class="r" style="left:239.10px;top:249.57px;width:108.30px;height:0.60px;background:#c0c0c0;"></div>
<div class="r" style="left:239.10px;top:263.24px;width:108.30px;height:0.60px;background:#c0c0c0;"></div>
<div class="r" style="left:239.10px;top:276.91px;width:108.30px;height:0.60px;background:#c0c0c0;"></div>
<div class="r" style="left:239.10px;top:290.58px;width:108.30px;height:0.60px;background:#c0c0c0;"></div>
<div class="r" style="left:239.10px;top:304.25px;width:108.30px;height:0.60px;background:#c0c0c0;"></div>
<div class="r" style="left:239.10px;top:317.92px;width:108.30px;height:0.60px;background:#c0c0c0;"></div>
<div class="r" style="left:239.10px;top:331.59px;width:108.30px;height:0.60px;background:#c0c0c0;"></div>
<div class="r" style="left:239.10px;top:345.26px;width:108.30px;height:0.60px;background:#c0c0c0;"></div>
<div class="r" style="left:239.10px;top:358.93px;width:108.30px;height:0.60px;background:#c0c0c0;"></div>
<div class="r" style="left:239.10px;top:372.60px;width:108.30px;height:0.60px;background:#c0c0c0;"></div>
<div class="r" style="left:239.10px;top:386.27px;width:108.30px;height:0.60px;background:#c0c0c0;"></div>
<div class="r" style="left:239.10px;top:399.94px;width:108.30px;height:0.60px;background:#c0c0c0;"></div>
<div class="r" style="left:239.10px;top:413.61px;width:108.30px;height:0.60px;background:#c0c0c0;"></div>
<div class="r" style="left:293.10px;top:168.05px;width:0.60px;height:257.75px;background:#c0c0c0;"></div>
<div class="r" style="left:293.80px;top:181.22px;width:53.60px;height:0.60px;background:#c0c0c0;"></div>
<div class="r" style="left:239.0px;top:168.7px;width:51.7px;height:9.9px;background:#fff;border:0.7px solid #5f8a72;"></div>
<span class="t" style="left:21.30px;top:169px;font-size:9.1px;line-height:12px;letter-spacing:-0.083px;color:#1c1c1c;font-weight:bold;-webkit-text-stroke:0.14px #1c1c1c;">Datum</span>
<span class="t" style="left:76.00px;top:169px;font-size:9.1px;line-height:12px;letter-spacing:-0.171px;color:#1c1c1c;font-weight:bold;-webkit-text-stroke:0.14px #1c1c1c;">Betrag</span>
<span class="t" style="left:130.80px;top:169px;font-size:9.1px;line-height:12px;letter-spacing:0.063px;color:#1c1c1c;font-weight:bold;-webkit-text-stroke:0.14px #1c1c1c;">Minus</span>
<span class="t" style="left:185.60px;top:169px;font-size:9.1px;line-height:12px;letter-spacing:-0.304px;color:#1c1c1c;font-weight:bold;-webkit-text-stroke:0.14px #1c1c1c;">Plus</span>
<span class="t" style="left:28.18px;top:183px;font-size:9.1px;line-height:12px;letter-spacing:-0.102px;color:#1c1c1c;-webkit-text-stroke:0.14px #1c1c1c;">01.01.2023</span>
<span class="t" style="left:89.15px;top:183px;font-size:9.1px;line-height:12px;letter-spacing:-0.084px;color:#1c1c1c;-webkit-text-stroke:0.14px #1c1c1c;">1'203'215</span>
<span class="t" style="left:28.18px;top:197px;font-size:9.1px;line-height:12px;letter-spacing:-0.102px;color:#1c1c1c;-webkit-text-stroke:0.14px #1c1c1c;">02.01.2023</span>
<span class="t" style="left:89.15px;top:197px;font-size:9.1px;line-height:12px;letter-spacing:-0.084px;color:#1c1c1c;-webkit-text-stroke:0.14px #1c1c1c;">1'207'836</span>
<span class="t" style="left:214.60px;top:197px;font-size:9.1px;line-height:12px;letter-spacing:-0.016px;color:#1c1c1c;-webkit-text-stroke:0.14px #1c1c1c;">4'621</span>
<span class="t" style="left:28.18px;top:210px;font-size:9.1px;line-height:12px;letter-spacing:-0.102px;color:#1c1c1c;-webkit-text-stroke:0.14px #1c1c1c;">03.01.2023</span>
<span class="t" style="left:89.15px;top:210px;font-size:9.1px;line-height:12px;letter-spacing:-0.084px;color:#1c1c1c;-webkit-text-stroke:0.14px #1c1c1c;">1'207'991</span>
<span class="t" style="left:209.74px;top:210px;font-size:9.1px;line-height:12px;letter-spacing:-0.047px;color:#1c1c1c;-webkit-text-stroke:0.14px #1c1c1c;">18'755</span>
<span class="t" style="left:155.14px;top:210px;font-size:9.1px;line-height:12px;letter-spacing:-0.047px;color:#1c1c1c;-webkit-text-stroke:0.14px #1c1c1c;">18'600</span>
<span class="t" style="left:28.18px;top:224px;font-size:9.1px;line-height:12px;letter-spacing:-0.102px;color:#1c1c1c;-webkit-text-stroke:0.14px #1c1c1c;">04.01.2023</span>
<span class="t" style="left:89.80px;top:224px;font-size:9.1px;line-height:12px;letter-spacing:-0.081px;color:#1c1c1c;-webkit-text-stroke:0.14px #1c1c1c;">1'220'711</span>
<span class="t" style="left:209.74px;top:224px;font-size:9.1px;line-height:12px;letter-spacing:-0.047px;color:#1c1c1c;-webkit-text-stroke:0.14px #1c1c1c;">12'720</span>
<span class="t" style="left:28.18px;top:238px;font-size:9.1px;line-height:12px;letter-spacing:-0.102px;color:#1c1c1c;-webkit-text-stroke:0.14px #1c1c1c;">05.01.2023</span>
<span class="t" style="left:89.15px;top:238px;font-size:9.1px;line-height:12px;letter-spacing:-0.084px;color:#1c1c1c;-webkit-text-stroke:0.14px #1c1c1c;">1'231'293</span>
<span class="t" style="left:209.74px;top:238px;font-size:9.1px;line-height:12px;letter-spacing:-0.047px;color:#1c1c1c;-webkit-text-stroke:0.14px #1c1c1c;">10'582</span>
<span class="t" style="left:28.18px;top:251px;font-size:9.1px;line-height:12px;letter-spacing:-0.102px;color:#1c1c1c;-webkit-text-stroke:0.14px #1c1c1c;">06.01.2023</span>
<span class="t" style="left:89.15px;top:251px;font-size:9.1px;line-height:12px;letter-spacing:-0.084px;color:#1c1c1c;-webkit-text-stroke:0.14px #1c1c1c;">1'231'293</span>
<span class="t" style="left:28.18px;top:265px;font-size:9.1px;line-height:12px;letter-spacing:-0.102px;color:#1c1c1c;-webkit-text-stroke:0.14px #1c1c1c;">07.01.2023</span>
<span class="t" style="left:89.15px;top:265px;font-size:9.1px;line-height:12px;letter-spacing:-0.084px;color:#1c1c1c;-webkit-text-stroke:0.14px #1c1c1c;">1'235'961</span>
<span class="t" style="left:214.60px;top:265px;font-size:9.1px;line-height:12px;letter-spacing:-0.016px;color:#1c1c1c;-webkit-text-stroke:0.14px #1c1c1c;">4'668</span>
<span class="t" style="left:28.18px;top:279px;font-size:9.1px;line-height:12px;letter-spacing:-0.102px;color:#1c1c1c;-webkit-text-stroke:0.14px #1c1c1c;">08.01.2023</span>
<span class="t" style="left:89.15px;top:279px;font-size:9.1px;line-height:12px;letter-spacing:-0.084px;color:#1c1c1c;-webkit-text-stroke:0.14px #1c1c1c;">1'248'225</span>
<span class="t" style="left:209.74px;top:279px;font-size:9.1px;line-height:12px;letter-spacing:-0.047px;color:#1c1c1c;-webkit-text-stroke:0.14px #1c1c1c;">12'264</span>
<span class="t" style="left:28.18px;top:292px;font-size:9.1px;line-height:12px;letter-spacing:-0.102px;color:#1c1c1c;-webkit-text-stroke:0.14px #1c1c1c;">09.01.2023</span>
<span class="t" style="left:89.15px;top:292px;font-size:9.1px;line-height:12px;letter-spacing:-0.084px;color:#1c1c1c;-webkit-text-stroke:0.14px #1c1c1c;">1'254'220</span>
<span class="t" style="left:214.60px;top:292px;font-size:9.1px;line-height:12px;letter-spacing:-0.016px;color:#1c1c1c;-webkit-text-stroke:0.14px #1c1c1c;">5'995</span>
<span class="t" style="left:28.18px;top:306px;font-size:9.1px;line-height:12px;letter-spacing:-0.102px;color:#1c1c1c;-webkit-text-stroke:0.14px #1c1c1c;">10.01.2023</span>
<span class="t" style="left:89.15px;top:306px;font-size:9.1px;line-height:12px;letter-spacing:-0.084px;color:#1c1c1c;-webkit-text-stroke:0.14px #1c1c1c;">1'248'100</span>
<span class="t" style="left:209.74px;top:306px;font-size:9.1px;line-height:12px;letter-spacing:-0.047px;color:#1c1c1c;-webkit-text-stroke:0.14px #1c1c1c;">12'480</span>
<span class="t" style="left:155.14px;top:306px;font-size:9.1px;line-height:12px;letter-spacing:-0.047px;color:#1c1c1c;-webkit-text-stroke:0.14px #1c1c1c;">18'600</span>
<span class="t" style="left:28.83px;top:320px;font-size:9.1px;line-height:12px;letter-spacing:-0.099px;color:#1c1c1c;-webkit-text-stroke:0.14px #1c1c1c;">11.01.2023</span>
<span class="t" style="left:89.15px;top:320px;font-size:9.1px;line-height:12px;letter-spacing:-0.084px;color:#1c1c1c;-webkit-text-stroke:0.14px #1c1c1c;">1'254'156</span>
<span class="t" style="left:214.60px;top:320px;font-size:9.1px;line-height:12px;letter-spacing:-0.016px;color:#1c1c1c;-webkit-text-stroke:0.14px #1c1c1c;">6'056</span>
<span class="t" style="left:28.18px;top:333px;font-size:9.1px;line-height:12px;letter-spacing:-0.102px;color:#1c1c1c;-webkit-text-stroke:0.14px #1c1c1c;">12.01.2023</span>
<span class="t" style="left:84.80px;top:333px;font-size:9.1px;line-height:12px;letter-spacing:-0.069px;color:#1c1c1c;-webkit-text-stroke:0.14px #1c1c1c;">#WERT!</span>
<svg class="r" style="left:75.20px;top:332.09px;" width="5" height="5" viewBox="0 0 5 5"><path d="M0 0H4.2L0 4.2Z" fill="#1f9350"/></svg>
<span class="t" style="left:209.74px;top:333px;font-size:9.1px;line-height:12px;letter-spacing:-0.047px;color:#1c1c1c;-webkit-text-stroke:0.14px #1c1c1c;">16'656</span>
<span class="t" style="left:28.18px;top:347px;font-size:9.1px;line-height:12px;letter-spacing:-0.102px;color:#1c1c1c;-webkit-text-stroke:0.14px #1c1c1c;">13.01.2023</span>
<span class="t" style="left:84.80px;top:347px;font-size:9.1px;line-height:12px;letter-spacing:-0.069px;color:#1c1c1c;-webkit-text-stroke:0.14px #1c1c1c;">#WERT!</span>
<svg class="r" style="left:75.20px;top:345.76px;" width="5" height="5" viewBox="0 0 5 5"><path d="M0 0H4.2L0 4.2Z" fill="#1f9350"/></svg>
<span class="t" style="left:214.60px;top:347px;font-size:9.1px;line-height:12px;letter-spacing:-0.016px;color:#1c1c1c;-webkit-text-stroke:0.14px #1c1c1c;">5'769</span>
<span class="t" style="left:28.18px;top:361px;font-size:9.1px;line-height:12px;letter-spacing:-0.102px;color:#1c1c1c;-webkit-text-stroke:0.14px #1c1c1c;">14.01.2023</span>
<span class="t" style="left:84.80px;top:361px;font-size:9.1px;line-height:12px;letter-spacing:-0.069px;color:#1c1c1c;-webkit-text-stroke:0.14px #1c1c1c;">#WERT!</span>
<svg class="r" style="left:75.20px;top:359.43px;" width="5" height="5" viewBox="0 0 5 5"><path d="M0 0H4.2L0 4.2Z" fill="#1f9350"/></svg>
<span class="t" style="left:210.39px;top:361px;font-size:9.1px;line-height:12px;letter-spacing:-0.042px;color:#1c1c1c;-webkit-text-stroke:0.14px #1c1c1c;">11'956</span>
<span class="t" style="left:28.18px;top:374px;font-size:9.1px;line-height:12px;letter-spacing:-0.102px;color:#1c1c1c;-webkit-text-stroke:0.14px #1c1c1c;">15.01.2023</span>
<span class="t" style="left:84.80px;top:374px;font-size:9.1px;line-height:12px;letter-spacing:-0.069px;color:#1c1c1c;-webkit-text-stroke:0.14px #1c1c1c;">#WERT!</span>
<svg class="r" style="left:75.20px;top:373.10px;" width="5" height="5" viewBox="0 0 5 5"><path d="M0 0H4.2L0 4.2Z" fill="#1f9350"/></svg>
<span class="t" style="left:215.25px;top:374px;font-size:9.1px;line-height:12px;letter-spacing:-0.010px;color:#1c1c1c;-webkit-text-stroke:0.14px #1c1c1c;">5'011</span>
<span class="t" style="left:28.18px;top:388px;font-size:9.1px;line-height:12px;letter-spacing:-0.102px;color:#1c1c1c;-webkit-text-stroke:0.14px #1c1c1c;">16.01.2023</span>
<span class="t" style="left:84.80px;top:388px;font-size:9.1px;line-height:12px;letter-spacing:-0.069px;color:#1c1c1c;-webkit-text-stroke:0.14px #1c1c1c;">#WERT!</span>
<svg class="r" style="left:75.20px;top:386.77px;" width="5" height="5" viewBox="0 0 5 5"><path d="M0 0H4.2L0 4.2Z" fill="#1f9350"/></svg>
<span class="t" style="left:214.60px;top:388px;font-size:9.1px;line-height:12px;letter-spacing:-0.016px;color:#1c1c1c;-webkit-text-stroke:0.14px #1c1c1c;">1'504</span>
<span class="t" style="left:28.18px;top:402px;font-size:9.1px;line-height:12px;letter-spacing:-0.102px;color:#1c1c1c;-webkit-text-stroke:0.14px #1c1c1c;">17.01.2023</span>
<span class="t" style="left:84.80px;top:402px;font-size:9.1px;line-height:12px;letter-spacing:-0.069px;color:#1c1c1c;-webkit-text-stroke:0.14px #1c1c1c;">#WERT!</span>
<svg class="r" style="left:75.20px;top:400.44px;" width="5" height="5" viewBox="0 0 5 5"><path d="M0 0H4.2L0 4.2Z" fill="#1f9350"/></svg>
<span class="t" style="left:209.74px;top:402px;font-size:9.1px;line-height:12px;letter-spacing:-0.047px;color:#1c1c1c;-webkit-text-stroke:0.14px #1c1c1c;">14'138</span>
<span class="t" style="left:155.14px;top:402px;font-size:9.1px;line-height:12px;letter-spacing:-0.047px;color:#1c1c1c;-webkit-text-stroke:0.14px #1c1c1c;">18'600</span>
<span class="t" style="left:28.18px;top:415px;font-size:9.1px;line-height:12px;letter-spacing:-0.102px;color:#1c1c1c;-webkit-text-stroke:0.14px #1c1c1c;">18.01.2023</span>
<span class="t" style="left:84.80px;top:415px;font-size:9.1px;line-height:12px;letter-spacing:-0.069px;color:#1c1c1c;-webkit-text-stroke:0.14px #1c1c1c;">#WERT!</span>
<svg class="r" style="left:75.20px;top:414.11px;" width="5" height="5" viewBox="0 0 5 5"><path d="M0 0H4.2L0 4.2Z" fill="#1f9350"/></svg>
<span class="t" style="left:214.60px;top:415px;font-size:9.1px;line-height:12px;letter-spacing:-0.016px;color:#1c1c1c;-webkit-text-stroke:0.14px #1c1c1c;">6'656</span>
<div class="r" style="left:621.60px;top:154.80px;width:17.50px;height:271.00px;background:#f4f4f4;"></div>
<svg class="r" style="left:628.00px;top:156.00px;" width="8" height="8" viewBox="0 0 8 8"><path d="M1 6L4 2L7 6Z" fill="#5e5e5e"/></svg>
<div class="r" style="left:628.80px;top:166.40px;width:6.00px;height:47.40px;background:#666;border-radius:3px;"></div>
<svg class="r" style="left:628.00px;top:417.50px;" width="8" height="8" viewBox="0 0 8 8"><path d="M1 2L4 6L7 2Z" fill="#5e5e5e"/></svg>
<div class="r" style="left:2.00px;top:425.80px;width:637.10px;height:21.40px;background:#efefef;"></div>
<svg class="r" style="left:20.00px;top:432.00px;" width="8" height="9" viewBox="0 0 8 9"><path d="M5.6 1.4L2.4 4.5L5.6 7.6" fill="none" stroke="#b0b0b0" stroke-width="0.9" stroke-linecap="round" stroke-linejoin="round"/></svg>
<svg class="r" style="left:42.00px;top:432.00px;" width="8" height="9" viewBox="0 0 8 9"><path d="M2.4 1.4L5.6 4.5L2.4 7.6" fill="none" stroke="#b0b0b0" stroke-width="0.9" stroke-linecap="round" stroke-linejoin="round"/></svg>
<span class="t" style="left:85.80px;top:430px;font-size:9.4px;line-height:13px;letter-spacing:0.073px;color:#4a4a4a;-webkit-text-stroke:0.22px #4a4a4a;">Tabelle1</span>
<div class="r" style="left:129.80px;top:430.50px;width:0.70px;height:12.00px;background:#cfcfcf;"></div>
<span class="t" style="left:138.40px;top:430px;font-size:9.4px;line-height:13px;letter-spacing:0.098px;color:#4a4a4a;-webkit-text-stroke:0.22px #4a4a4a;">Tabelle2</span>
<div class="r" style="left:187.4px;top:426px;width:46.4px;height:19.4px;background:#fff;border-radius:0 0 3px 3px;box-shadow:0 0.5px 1px rgba(0,0,0,0.2);"></div>
<span class="t" style="left:192.00px;top:429px;font-size:9.4px;line-height:13px;letter-spacing:0.035px;color:#1d1d1d;font-weight:bold;">Tabelle3</span>
<div class="r" style="left:192.00px;top:440.50px;width:37.00px;height:1.20px;background:#1c8048;border-radius:1px;"></div>
<svg class="r" style="left:265.00px;top:431.50px;" width="10" height="10" viewBox="0 0 10 10"><path d="M4.8 1V8.6M1 4.8H8.6" stroke="#444" stroke-width="0.85"/></svg>
<div class="r" style="left:385.50px;top:433.20px;width:1.20px;height:1.20px;background:#555;border-radius:50%;"></div>
<div class="r" style="left:385.50px;top:436.40px;width:1.20px;height:1.20px;background:#555;border-radius:50%;"></div>
<div class="r" style="left:385.50px;top:439.60px;width:1.20px;height:1.20px;background:#555;border-radius:50%;"></div>
<svg class="r" style="left:399.00px;top:433.00px;" width="7" height="8" viewBox="0 0 7 8"><path d="M5.6 1L1.4 4L5.6 7Z" fill="#5e5e5e"/></svg>
<div class="r" style="left:409.00px;top:434.00px;width:186.40px;height:5.60px;background:#666;border-radius:3px;"></div>
<svg class="r" style="left:616.50px;top:433.00px;" width="7" height="8" viewBox="0 0 7 8"><path d="M1.4 1L5.6 4L1.4 7Z" fill="#5e5e5e"/></svg>
<div class="r" style="left:2.00px;top:447.20px;width:637.10px;height:14.90px;background:#f5f5f5;border-radius:0 0 3px 4px;"></div>
<div class="r" style="left:2.00px;top:447.00px;width:637.10px;height:0.60px;background:#e4e4e4;"></div>
<span class="t" style="left:7.80px;top:450px;font-size:7.8px;line-height:11px;letter-spacing:-0.059px;color:#3d3d3d;-webkit-text-stroke:0.12px #3d3d3d;">Blatt 3 von 3</span>
<span class="t" style="left:60.60px;top:450px;font-size:7.8px;line-height:11px;letter-spacing:0.127px;color:#3d3d3d;-webkit-text-stroke:0.12px #3d3d3d;">Arbeitsmappenstatistiken</span>
<svg class="r" style="left:163.50px;top:450.50px;" width="11" height="10" viewBox="0 0 11 10"><rect x="0.9" y="1.4" width="9" height="7" rx="0.8" fill="none" stroke="#3a3a3a" stroke-width="0.95"/><path d="M0.9 3.2H9.9" stroke="#3a3a3a" stroke-width="0.9"/><circle cx="6.4" cy="6" r="2" fill="#f5f5f5" stroke="#3a3a3a" stroke-width="0.9"/><circle cx="6.4" cy="6" r="0.9" fill="#3a3a3a"/></svg>
<svg class="r" style="left:185.00px;top:450.00px;" width="12" height="11" viewBox="0 0 12 11"><circle cx="5" cy="1.9" r="1.2" fill="none" stroke="#3a3a3a" stroke-width="0.9"/><path d="M1.2 4.3Q5 3.4 8.8 4.3M5 4V6.8M5 6.8L2.6 10.2M5 6.8L6.2 8.2" fill="none" stroke="#3a3a3a" stroke-width="0.95" stroke-linecap="round"/><path d="M7 7.4L10.2 10.4M10.2 7.4L7 10.4" stroke="#3a3a3a" stroke-width="0.95"/></svg>
<span class="t" style="left:198.40px;top:450px;font-size:7.8px;line-height:11px;letter-spacing:0.058px;color:#3d3d3d;-webkit-text-stroke:0.12px #3d3d3d;">Barrierefreiheit: Untersuchen</span>
<svg class="r" style="left:324.50px;top:450.50px;" width="12" height="10" viewBox="0 0 12 10"><path d="M5 7H1.6Q1 7 1 6.4V1.8Q1 1.2 1.6 1.2H9.4Q10 1.2 10 1.8V3.2" fill="none" stroke="#3a3a3a" stroke-width="0.95"/><path d="M2.6 8.9H5" stroke="#3a3a3a" stroke-width="0.95"/><rect x="6.2" y="5" width="4.6" height="4.2" rx="0.5" fill="#f5f5f5" stroke="#3a3a3a" stroke-width="0.95"/><path d="M7.3 5V4.2Q7.3 3.2 8.5 3.2Q9.7 3.2 9.7 4.2V5" fill="none" stroke="#3a3a3a" stroke-width="0.8"/><circle cx="8.5" cy="7.1" r="0.7" fill="#3a3a3a"/></svg>
<span class="t" style="left:337.20px;top:450px;font-size:7.8px;line-height:11px;letter-spacing:0.102px;color:#3d3d3d;-webkit-text-stroke:0.12px #3d3d3d;">Anzeigeeinstellungen</span>
<div class="r" style="left:427.40px;top:447.80px;width:25.60px;height:14.30px;background:#dcdcdc;"></div>
<svg class="r" style="left:434.50px;top:450.50px;" width="11" height="10" viewBox="0 0 11 10"><rect x="1" y="1" width="8.6" height="7.6" fill="none" stroke="#333" stroke-width="0.8"/><path d="M1 3.6H9.6M1 6.1H9.6M3.9 1V8.6M6.7 1V8.6" stroke="#333" stroke-width="0.7"/></svg>
<svg class="r" style="left:462.00px;top:450.50px;" width="11" height="10" viewBox="0 0 11 10"><rect x="1" y="1" width="8.6" height="7.6" fill="none" stroke="#444" stroke-width="0.8"/><rect x="3" y="2.8" width="4.6" height="4" fill="none" stroke="#444" stroke-width="0.7"/><path d="M4 4.2H6.6M4 5.4H6.6" stroke="#444" stroke-width="0.5"/></svg>
<svg class="r" style="left:489.50px;top:450.50px;" width="11" height="10" viewBox="0 0 11 10"><rect x="1" y="1" width="8.6" height="7.6" fill="none" stroke="#444" stroke-width="0.8"/><path d="M3.8 1V5.4H9.6" fill="none" stroke="#444" stroke-width="0.8"/></svg>
<div class="r" style="left:513.60px;top:455.20px;width:4.40px;height:0.70px;background:#444;"></div>
<div class="r" style="left:521.40px;top:455.30px;width:68.60px;height:0.50px;background:#8a8a8a;"></div>
<div class="r" style="left:554.80px;top:451.40px;width:2.80px;height:8.40px;background:#444;border-radius:0.6px;"></div>
<svg class="r" style="left:592.00px;top:451.50px;" width="8" height="8" viewBox="0 0 8 8"><path d="M4 1.4V6.6M1.4 4H6.6" stroke="#444" stroke-width="0.75"/></svg>
<span class="t" style="left:608.00px;top:450px;font-size:7.8px;line-height:11px;letter-spacing:-0.387px;color:#3d3d3d;-webkit-text-stroke:0.12px #3d3d3d;">100%</span>
<div class="r" style="left:296.0px;top:177.0px;width:219.20000000000005px;height:225.60000000000002px;background:#f0f0f0;border-radius:5px;box-shadow:0 0 0 0.5px rgba(255,255,255,0.75),0 2px 7px rgba(0,0,0,0.20);overflow:hidden;"><div class="r" style="left:0;top:20.6px;right:0;bottom:0;border:1.6px solid #e9f2fb;border-top-width:1.2px;border-radius:0 0 5px 5px;"></div><div class="r" style="left:0;top:0;right:0;bottom:0;border:0.8px solid #3b78b4;border-top:none;border-radius:5px;"></div><div class="r" style="left:0;top:0;width:100%;height:20.7px;background:#0467c2;"></div></div>
<span class="t" style="left:302.00px;top:182px;font-size:8.5px;line-height:12px;letter-spacing:-0.148px;color:#fff;-webkit-text-stroke:0.22px #fff;">Inhalte auswählen</span>
<span class="t" style="left:465.40px;top:182px;font-size:8.8px;line-height:12px;letter-spacing:-0.094px;color:#fff;">?</span>
<svg class="r" style="left:494.00px;top:183.00px;" width="10" height="10" viewBox="0 0 10 10"><path d="M1.4 1.4L7.8 7.8M7.8 1.4L1.4 7.8" stroke="#fff" stroke-width="0.85" stroke-linecap="round"/></svg>
<span class="t" style="left:300.80px;top:202px;font-size:8.7px;line-height:12px;letter-spacing:-0.396px;color:#1e1e1e;-webkit-text-stroke:0.22px #1e1e1e;">Auswählen</span>
<div class="r" style="left:342.50px;top:206.60px;width:169.90px;height:0.70px;background:#dadada;"></div>
<div class="r" style="left:307.40px;top:218.00px;width:6.60px;height:6.60px;border:0.7px solid #686868;border-radius:50%;background:#fafafa;"></div>
<span class="t" style="left:318.30px;top:216px;font-size:8.7px;line-height:12px;letter-spacing:-0.200px;color:#101010;-webkit-text-stroke:0.22px #101010;"><u>N</u>otizen</span>
<div class="r" style="left:307.40px;top:230.90px;width:6.60px;height:6.60px;border:0.7px solid #686868;border-radius:50%;background:#fafafa;"></div>
<span class="t" style="left:318.30px;top:229px;font-size:8.7px;line-height:12px;letter-spacing:-0.332px;color:#101010;-webkit-text-stroke:0.22px #101010;">Ko<u>n</u>stanten</span>
<div class="r" style="left:307.40px;top:243.90px;width:6.60px;height:6.60px;border:0.7px solid #686868;border-radius:50%;background:#fafafa;"></div>
<span class="t" style="left:318.30px;top:242px;font-size:8.7px;line-height:12px;letter-spacing:-0.401px;color:#101010;-webkit-text-stroke:0.22px #101010;">F<u>o</u>rmeln</span>
<div class="r" style="left:319.40px;top:256.60px;width:8.4px;height:8.4px;border-radius:1.5px;background:#cdcdcd;"></div>
<svg class="r" style="left:319.60px;top:257.00px;" width="8" height="8" viewBox="0 0 8 8"><path d="M1.8 4.2L3.4 5.8L6.4 2.4" fill="none" stroke="#dcdcdc" stroke-width="0.9"/></svg>
<span class="t" style="left:330.60px;top:255px;font-size:8.7px;line-height:12px;letter-spacing:-0.384px;color:#999999;-webkit-text-stroke:0.22px #999999;">Zahlen</span>
<div class="r" style="left:319.40px;top:269.40px;width:8.4px;height:8.4px;border-radius:1.5px;background:#cdcdcd;"></div>
<svg class="r" style="left:319.60px;top:269.80px;" width="8" height="8" viewBox="0 0 8 8"><path d="M1.8 4.2L3.4 5.8L6.4 2.4" fill="none" stroke="#dcdcdc" stroke-width="0.9"/></svg>
<span class="t" style="left:330.60px;top:268px;font-size:8.7px;line-height:12px;letter-spacing:-0.239px;color:#999999;-webkit-text-stroke:0.22px #999999;">Text</span>
<div class="r" style="left:319.40px;top:282.40px;width:8.4px;height:8.4px;border-radius:1.5px;background:#cdcdcd;"></div>
<svg class="r" style="left:319.60px;top:282.80px;" width="8" height="8" viewBox="0 0 8 8"><path d="M1.8 4.2L3.4 5.8L6.4 2.4" fill="none" stroke="#dcdcdc" stroke-width="0.9"/></svg>
<span class="t" style="left:330.60px;top:281px;font-size:8.7px;line-height:12px;letter-spacing:-0.251px;color:#999999;-webkit-text-stroke:0.22px #999999;">Wahrheitswerte</span>
<div class="r" style="left:319.40px;top:295.20px;width:8.4px;height:8.4px;border-radius:1.5px;background:#cdcdcd;"></div>
<svg class="r" style="left:319.60px;top:295.60px;" width="8" height="8" viewBox="0 0 8 8"><path d="M1.8 4.2L3.4 5.8L6.4 2.4" fill="none" stroke="#dcdcdc" stroke-width="0.9"/></svg>
<span class="t" style="left:330.60px;top:294px;font-size:8.7px;line-height:12px;letter-spacing:-0.377px;color:#999999;-webkit-text-stroke:0.22px #999999;">Fehler</span>
<div class="r" style="left:307.20px;top:308.80px;width:8.40px;height:8.40px;border-radius:50%;background:#0a63b8;"></div>
<div class="r" style="left:309.70px;top:311.30px;width:3.4px;height:3.4px;border-radius:50%;background:#fff;"></div>
<span class="t" style="left:318.30px;top:307px;font-size:8.7px;line-height:12px;letter-spacing:-0.484px;color:#101010;-webkit-text-stroke:0.22px #101010;">Lee<u>r</u>zellen</span>
<div class="r" style="left:307.40px;top:322.00px;width:6.60px;height:6.60px;border:0.7px solid #686868;border-radius:50%;background:#fafafa;"></div>
<span class="t" style="left:318.30px;top:320px;font-size:8.7px;line-height:12px;letter-spacing:-0.392px;color:#101010;-webkit-text-stroke:0.22px #101010;">Aktueller <u>B</u>ereich</span>
<div class="r" style="left:307.40px;top:335.00px;width:6.60px;height:6.60px;border:0.7px solid #686868;border-radius:50%;background:#fafafa;"></div>
<span class="t" style="left:318.30px;top:333px;font-size:8.7px;line-height:12px;letter-spacing:-0.302px;color:#101010;-webkit-text-stroke:0.22px #101010;">Aktuelles Arra<u>y</u></span>
<div class="r" style="left:307.40px;top:347.80px;width:6.60px;height:6.60px;border:0.7px solid #686868;border-radius:50%;background:#fafafa;"></div>
<span class="t" style="left:318.30px;top:346px;font-size:8.7px;line-height:12px;letter-spacing:-0.269px;color:#101010;-webkit-text-stroke:0.22px #101010;">Ob<u>j</u>ekte</span>
<div class="r" style="left:317.4px;top:307.0px;width:36.6px;height:11.0px;border:0.7px dotted #222;"></div>
<div class="r" style="left:412.20px;top:218.00px;width:6.60px;height:6.60px;border:0.7px solid #686868;border-radius:50%;background:#fafafa;"></div>
<span class="t" style="left:423.40px;top:216px;font-size:8.7px;line-height:12px;letter-spacing:-0.373px;color:#101010;-webkit-text-stroke:0.22px #101010;">Zeilenunterschie<u>d</u>e</span>
<div class="r" style="left:412.20px;top:230.90px;width:6.60px;height:6.60px;border:0.7px solid #686868;border-radius:50%;background:#fafafa;"></div>
<span class="t" style="left:423.40px;top:229px;font-size:8.7px;line-height:12px;letter-spacing:-0.364px;color:#101010;-webkit-text-stroke:0.22px #101010;">S<u>p</u>altenunterschiede</span>
<div class="r" style="left:412.20px;top:243.90px;width:6.60px;height:6.60px;border:0.7px solid #686868;border-radius:50%;background:#fafafa;"></div>
<span class="t" style="left:423.40px;top:242px;font-size:8.7px;line-height:12px;letter-spacing:-0.325px;color:#101010;-webkit-text-stroke:0.22px #101010;"><u>V</u>orgängerzellen</span>
<div class="r" style="left:412.20px;top:256.90px;width:6.60px;height:6.60px;border:0.7px solid #686868;border-radius:50%;background:#fafafa;"></div>
<span class="t" style="left:423.40px;top:255px;font-size:8.7px;line-height:12px;letter-spacing:-0.350px;color:#101010;-webkit-text-stroke:0.22px #101010;">Na<u>c</u>hfolgerzellen</span>
<div class="r" style="left:412.20px;top:296.00px;width:6.60px;height:6.60px;border:0.7px solid #686868;border-radius:50%;background:#fafafa;"></div>
<span class="t" style="left:423.40px;top:294px;font-size:8.7px;line-height:12px;letter-spacing:-0.531px;color:#101010;-webkit-text-stroke:0.22px #101010;">Letzte <u>Z</u>elle</span>
<div class="r" style="left:412.20px;top:309.00px;width:6.60px;height:6.60px;border:0.7px solid #686868;border-radius:50%;background:#fafafa;"></div>
<span class="t" style="left:423.40px;top:307px;font-size:8.7px;line-height:12px;letter-spacing:-0.393px;color:#101010;-webkit-text-stroke:0.22px #101010;">Nur <u>s</u>ichtbare Zellen</span>
<div class="r" style="left:412.20px;top:322.00px;width:6.60px;height:6.60px;border:0.7px solid #686868;border-radius:50%;background:#fafafa;"></div>
<span class="t" style="left:423.40px;top:320px;font-size:8.7px;line-height:12px;letter-spacing:-0.447px;color:#101010;-webkit-text-stroke:0.22px #101010;">Bed<u>i</u>ngte Formate</span>
<div class="r" style="left:412.20px;top:335.00px;width:6.60px;height:6.60px;border:0.7px solid #686868;border-radius:50%;background:#fafafa;"></div>
<span class="t" style="left:423.40px;top:333px;font-size:8.7px;line-height:12px;letter-spacing:-0.196px;color:#101010;-webkit-text-stroke:0.22px #101010;">Da<u>t</u>enüberprüfung</span>
<div class="r" style="left:424.10px;top:269.80px;width:8.00px;height:8.00px;border-radius:50%;background:#c9c9c9;"></div>
<div class="r" style="left:426.50px;top:272.20px;width:3.2px;height:3.2px;border-radius:50%;background:#f4f4f4;"></div>
<span class="t" style="left:435.60px;top:268px;font-size:8.7px;line-height:12px;letter-spacing:-0.268px;color:#999999;-webkit-text-stroke:0.22px #999999;">Nur direkte</span>
<div class="r" style="left:424.10px;top:282.70px;width:6.60px;height:6.60px;border:0.7px solid #d0d0d0;border-radius:50%;background:#f7f7f7;"></div>
<span class="t" style="left:435.60px;top:281px;font-size:8.7px;line-height:12px;letter-spacing:-0.502px;color:#999999;-webkit-text-stroke:0.22px #999999;">Alle Ebenen</span>
<div class="r" style="left:424.10px;top:348.00px;width:8.00px;height:8.00px;border-radius:50%;background:#c9c9c9;"></div>
<div class="r" style="left:426.50px;top:350.40px;width:3.2px;height:3.2px;border-radius:50%;background:#f4f4f4;"></div>
<span class="t" style="left:435.60px;top:346px;font-size:8.7px;line-height:12px;letter-spacing:-0.411px;color:#999999;-webkit-text-stroke:0.22px #999999;">Alles</span>
<div class="r" style="left:424.10px;top:360.80px;width:6.60px;height:6.60px;border:0.7px solid #d0d0d0;border-radius:50%;background:#f7f7f7;"></div>
<span class="t" style="left:435.60px;top:359px;font-size:8.7px;line-height:12px;letter-spacing:-0.528px;color:#999999;-webkit-text-stroke:0.22px #999999;">Gleiche</span>
<div class="r" style="left:401.4px;top:381.2px;width:48.4px;height:13.8px;border:0.8px solid #2b7fd0;border-radius:3px;background:#fdfdfd;"></div>
<span class="t" style="left:421.20px;top:383px;font-size:8.7px;line-height:12px;letter-spacing:-0.985px;color:#101010;-webkit-text-stroke:0.22px #101010;">OK</span>
<div class="r" style="left:459.6px;top:381.2px;width:48.4px;height:13.8px;border:0.6px solid #e6e6e6;border-radius:3px;background:#fcfcfc;box-shadow:0 0.5px 0.5px rgba(0,0,0,0.12);"></div>
<span class="t" style="left:464.60px;top:383px;font-size:8.7px;line-height:12px;letter-spacing:-0.365px;color:#101010;-webkit-text-stroke:0.22px #101010;">Abbrechen</span>
<div class="r" style="left:638.90px;top:37.20px;width:1.10px;height:422.30px;background:#3f9468;"></div>
<div class="r" style="left:1.50px;top:37.20px;width:0.50px;height:421.80px;background:#14532f;"></div>
</div></body></html>
